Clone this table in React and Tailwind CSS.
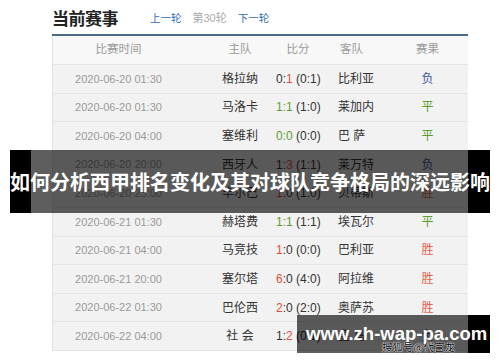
import React from "react";

const rows = [
  ["2020-06-20 01:30", "格拉纳", ["0", "1"], 1, "(0:1)", "比利亚", "负"],
  ["2020-06-20 01:30", "马洛卡", ["1", "1"], -1, "(1:0)", "莱加内", "平"],
  ["2020-06-20 04:00", "塞维利", ["0", "0"], -1, "(0:0)", "巴 萨", "平"],
  ["2020-06-20 20:00", "西牙人", ["1", "3"], 1, "(1:1)", "莱万特", "负"],
  ["2020-06-20 23:00", "毕尔巴", ["1", "0"], 0, "(1:0)", "贝蒂斯", "胜"],
  ["2020-06-21 01:30", "赫塔费", ["1", "1"], -1, "(1:1)", "埃瓦尔", "平"],
  ["2020-06-21 04:00", "马竞技", ["1", "0"], 0, "(0:0)", "巴利亚", "胜"],
  ["2020-06-21 20:00", "塞尔塔", ["6", "0"], 0, "(4:0)", "阿拉维", "胜"],
  ["2020-06-22 01:30", "巴伦西", ["2", "0"], 0, "(2:0)", "奥萨苏", "胜"],
  ["2020-06-22 04:00", "社 会", ["1", "2"], 1, "(0:1)", "皇 马", "负"],
];

function ScoreNum({ v, hl, draw }) {
  if (draw) return <span className="text-[#5a9e32]">{v}</span>;
  if (hl) return <span className="text-[#e0503f]">{v}</span>;
  return <span className="text-[#333]">{v}</span>;
}

function Result({ r }) {
  if (r === "负") return <span className="text-[#3f5aa6]">{r}</span>;
  if (r === "平") return <span className="text-[#5a9e32]">{r}</span>;
  return <span className="text-[#e0604f]">{r}</span>;
}

export default function App() {
  const font = "font-['Liberation_Sans','Noto_Sans_CJK_SC',sans-serif]";
  return (
    <div className={`relative w-[500px] h-[362px] overflow-hidden bg-white ${font}`}>
      <div className="pl-[52px] pt-[7px]">
        <div className="flex items-center h-[22px]">
          <span className="text-[17px] font-bold text-[#222] font-['Noto_Sans_CJK_SC',sans-serif] tracking-[-0.5px]">当前赛事</span>
          <span className="ml-[32px] text-[10.5px] text-[#2f6db5] font-['Noto_Sans_CJK_SC',sans-serif]">上一轮</span>
          <span className="ml-[11px] text-[11px] text-[#aaa]">第30轮</span>
          <span className="ml-[11px] text-[10.5px] text-[#2f6db5] font-['Noto_Sans_CJK_SC',sans-serif]">下一轮</span>
        </div>
        <div className="mt-[5px] w-[416px] h-[2px] bg-[#4a6a8a]" />
        <div className="w-[416px] bg-[#f2f2f2] border-l border-[#e2e2e2]">
          <div className="flex items-center h-[29px] bg-[#f8f8f8] text-[11.5px] text-[#9a9a9a] border-b border-[#e4e4e4]">
            <div className="w-[151px] pr-[20px] text-center">比赛时间</div>
            <div className="w-[72px] text-center">主队</div>
            <div className="w-[44px] text-center">比分</div>
            <div className="w-[72px] pl-[20px]">客队</div>
            <div className="w-[76px] pr-[5px] text-center">赛果</div>
          </div>
          {rows.map((r, i) => {
            const draw = r[3] === -1;
            return (
              <div key={i} className="flex items-center h-[28.6px] border-b border-[#e4e4e4] text-[12px]">
                <div className="w-[151px] pr-[20px] text-center text-[11px] text-[#9a9a9a]">{r[0]}</div>
                <div className="w-[72px] text-center text-[#333] whitespace-pre">{r[1]}</div>
                <div className="w-[44px] text-center whitespace-nowrap">
                  <ScoreNum v={r[2][0]} hl={r[3] === 0} draw={draw} />
                  <span className={draw ? "text-[#5a9e32]" : "text-[#333]"}>:</span>
                  <ScoreNum v={r[2][1]} hl={r[3] === 1} draw={draw} />
                  <span className="text-[#333]"> {r[4]}</span>
                </div>
                <div className="w-[72px] pl-[18px] text-[#333] whitespace-pre">{r[5]}</div>
                <div className="w-[76px] pr-[5px] text-center"><Result r={r[6]} /></div>
              </div>
            );
          })}
        </div>
      </div>

      {/* Title banner */}
      <div className="absolute left-[10px] top-[150px] w-[480px] h-[63px] flex">
        <div className="w-[21px] bg-black" />
        <div className="flex-1 bg-black/[0.63]" />
        <div className="w-[22px] bg-black" />
      </div>
      <div className="absolute left-[10px] top-[150px] w-[480px] h-[63px] flex items-center justify-center text-white font-bold text-[20px] leading-none whitespace-nowrap font-['Noto_Sans_CJK_SC',sans-serif]">
        如何分析西甲排名变化及其对球队竞争格局的深远影响
      </div>

      {/* Watermark */}
      <div className="absolute left-[297px] top-[315px] w-[193px] h-[38px] flex">
        <div className="flex-1 bg-black/[0.63]" />
        <div className="w-[22px] bg-black" />
      </div>
      <div className="absolute left-[306px] top-[315px] h-[38px] flex items-center text-white font-bold text-[18.5px] font-['Liberation_Sans',sans-serif] whitespace-nowrap">
        www.zh-wap-pa.com
      </div>
      <div className="absolute left-[382px] top-[342px] text-[10.5px] leading-none text-black font-['Noto_Sans_CJK_SC',sans-serif] [text-shadow:0_0_1px_#fff,0_0_1px_#fff,0_0_1px_#fff]">
        搜狐号@代言龙
      </div>
    </div>
  );
}
